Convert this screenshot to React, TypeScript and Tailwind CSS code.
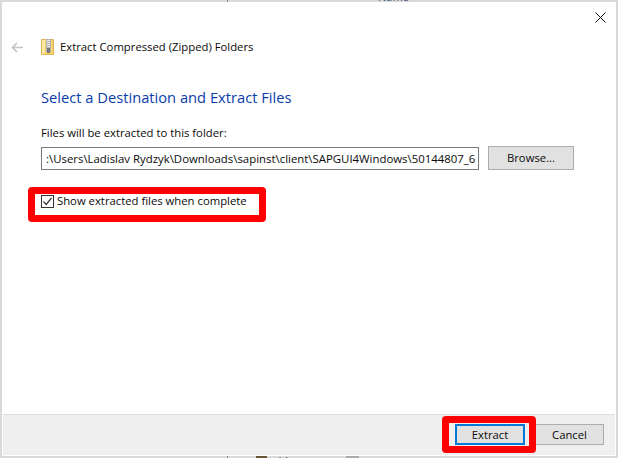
import React from "react";

const font = { fontFamily: '"Open Sans", "Noto Sans", sans-serif' };

const ZipIcon = () => (
  <svg className="block" width="13" height="16" viewBox="0 0 13 16">
    <path d="M0.5 0.5H12.5V15.5H0.5Z" fill="#f6d26b" stroke="#dcb54e" />
    <rect x="1" y="1" width="3" height="14" fill="#fbe8a6" />
    <rect x="5" y="0" width="5" height="13" fill="#b4b4b4" />
    <path d="M6 1.5H9M6 3.5H9M6 5.5H9M6 7.5H9" stroke="#ececec" strokeWidth="1" />
    <rect x="6" y="9" width="3" height="5" fill="#77777a" />
  </svg>
);

const App = () => {
  return (
    <div className="relative w-[618px] h-[458px] overflow-hidden bg-[#dadada] p-[2px] text-[11.3px] text-[#0a0a0a]" style={font}>
      {/* bits of the window behind that peek out round the dialog */}
      <div className="absolute left-[227px] top-0 w-[1px] h-[3px] bg-[#888888]" />
      <div className="absolute left-[227px] bottom-0 w-[1px] h-[2px] bg-[#888888]" />
      <div className="absolute left-[378px] top-[-9px] text-[11px] leading-[12px] text-[#445577]">Name</div>
      <div className="absolute left-[273px] bottom-[-9px] text-[11px] leading-[12px] text-[#333333]">videos</div>
      <div className="absolute left-[256px] bottom-0 w-[11px] h-[2px] bg-[#665533]" />
      <div className="absolute left-[346px] bottom-0 w-[13px] h-[2px] bg-[#aaaaaa]" />

      <div className="relative flex flex-col h-full bg-white">
        <div className="flex justify-end pt-[10px] pr-[10px]">
          <svg className="block" width="11" height="11" viewBox="0 0 11 11" stroke="#111" strokeWidth="1">
            <path d="M0.5 0.5L10.5 10.5M10.5 0.5L0.5 10.5" />
          </svg>
        </div>
        <div className="flex items-center mt-[15px] h-[18px]">
          <svg className="block ml-[9px]" width="12" height="11" viewBox="0 0 12 11" fill="none" stroke="#c4c4c4" strokeWidth="1.7">
            <path d="M12 5.5H1.5M6 1L1.5 5.5L6 10" />
          </svg>
          <div className="ml-[18px]">
            <ZipIcon />
          </div>
          <span className="ml-[6px] leading-[18px]">Extract Compressed (Zipped) Folders</span>
        </div>
        <div className="ml-[39px] mt-[30px] text-[14.7px] leading-[22px] text-[#0a3dab]">Select a Destination and Extract Files</div>
        <div className="ml-[39px] mt-[17px] leading-[16px]">Files will be extracted to this folder:</div>
        <div className="flex items-end mt-[5px] ml-[39px]">
          <div className="w-[438px] h-[23px] border border-[#7a7a7a] pl-[4px] text-[11.4px] leading-[21px] whitespace-nowrap overflow-hidden">
            :\Users\Ladislav Rydzyk\Downloads\sapinst\client\SAPGUI4Windows\50144807_6
          </div>
          <div className="ml-[9px] w-[86px] h-[24px] bg-[#e1e1e1] border border-[#adadad] text-center leading-[22px]">Browse...</div>
        </div>
        <div className="flex items-center ml-[39px] mt-[22px] h-[18px]">
          <div className="flex items-center justify-center w-[13px] h-[13px] bg-white border border-[#333333]">
            <svg className="block" width="11" height="11" viewBox="0 0 11 11" fill="none" stroke="#333333" strokeWidth="1.2">
              <path d="M1.5 5.5L4.2 8.5L9.5 2" />
            </svg>
          </div>
          <span className="ml-[3px] leading-[18px]">Show extracted files when complete</span>
        </div>
        <div className="flex-1" />
        <div className="flex justify-end items-start h-[41px] mx-[1px] mb-[1px] bg-[#efefef] border-t border-[#dfdfdf] pt-[9px] pr-[11px]">
          <div className="w-[70px] h-[21px] bg-[#e1e1e1] border-2 border-[#0078d7] text-center leading-[17px]">Extract</div>
          <div className="ml-[10px] w-[69px] h-[21px] bg-[#e1e1e1] border border-[#adadad] text-center leading-[19px]">Cancel</div>
        </div>
      </div>
      <div className="absolute left-[28px] top-[187px] w-[238px] h-[35px] border-[7px] border-[#ff0000] rounded-[4px]" />
      <div className="absolute left-[442px] top-[416px] w-[94px] h-[37px] border-[7px] border-[#ff0000] rounded-[4px]" />
    </div>
  );
};

export default App;
